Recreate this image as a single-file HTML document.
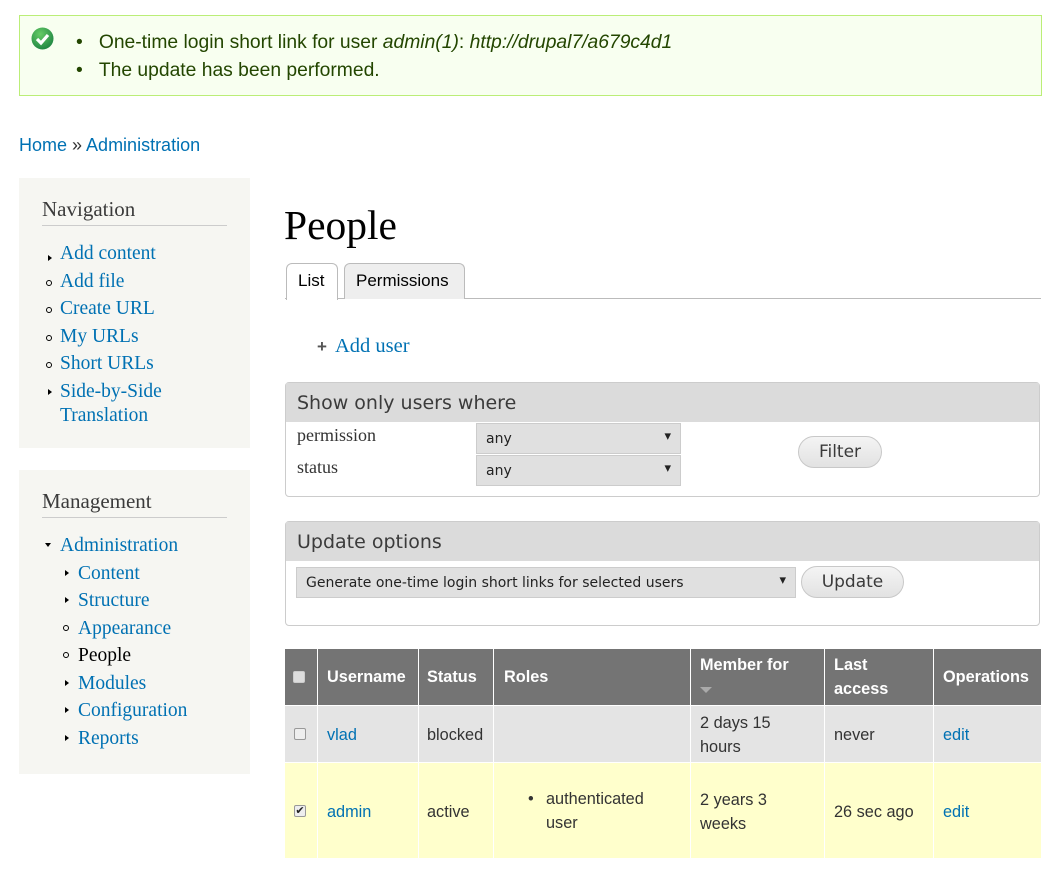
<!DOCTYPE html>
<html><head><meta charset="utf-8"><style>
*{margin:0;padding:0;box-sizing:border-box}
body{width:1063px;height:879px;background:#fff;font-family:"Liberation Sans",sans-serif;position:relative;overflow:hidden;color:#333}
.a{position:absolute}
a{color:#0071b3;text-decoration:none}
.serif{font-family:"Liberation Serif",serif}
.msg{left:19px;top:15px;width:1023px;height:81px;background:#f8fff0;border:1px solid #be7;color:#234600;font-size:19.3px}
.side{background:#f6f6f2;left:19px;width:231px}
.side h2{position:absolute;left:23px;top:19px;font-weight:normal;font-size:21px;color:#3b3b3b;width:185px;border-bottom:1px solid #ccc;padding-bottom:3px;font-family:"Liberation Serif",serif}
.li{position:absolute;font-family:"Liberation Serif",serif;font-size:19.5px;line-height:24px;margin-top:2px}
.tri{position:absolute;width:0;height:0;border-left:4px solid #000;border-top:3.5px solid transparent;border-bottom:3.5px solid transparent}
.circ{position:absolute;width:6px;height:6px;border:1px solid #000;border-radius:50%}
.tri2{position:absolute;width:0;height:0;border-top:4px solid #000;border-left:3.5px solid transparent;border-right:3.5px solid transparent}
.fs{border:1px solid #ccc;border-radius:4px;left:285px;width:755px}
.fs .lg{background:#dbdbdb;height:39px;padding:9px 11px 8px;color:#3b3b3b;font-family:"DejaVu Sans",sans-serif;font-size:19px}
.sel{position:absolute;background:#e0e0e0;border:1px solid #ccc;font-family:"DejaVu Sans",sans-serif;font-size:14px;padding:7px 9px 5px;color:#222}
.sel:after{content:"▾";position:absolute;right:9px;top:5px;font-size:13px}
.btn{position:absolute;background:linear-gradient(#f4f4f4,#e2e2e2);border:1px solid #c8c8c8;border-radius:16px;font-family:"DejaVu Sans",sans-serif;font-size:17px;text-align:center;color:#3a3a3a}
.c{position:absolute;font-size:16.3px;line-height:24px}
.th{position:absolute;background:#747474;color:#fff;font-weight:bold;font-size:16.3px;line-height:24px}
.cb{position:absolute;width:12px;height:12px;border:1px solid #999;border-radius:2px;background:#eee}
</style></head><body>
<div class="a msg">
<svg class="a" style="left:11px;top:11px" width="23" height="23" viewBox="0 0 23 23"><defs><radialGradient id="g" cx=".4" cy=".3" r=".7"><stop offset="0" stop-color="#6c6"/><stop offset="1" stop-color="#284"/></radialGradient></defs><circle cx="11.5" cy="11.5" r="11" fill="url(#g)"/><path d="M6 12l4 4 7-8" stroke="#fff" stroke-width="3.2" fill="none"/></svg>
<div class="a" style="left:56px;top:13px;line-height:28px">
<div>•&nbsp;&nbsp;&nbsp;One-time login short link for user <i>admin(1)</i>: <i>http://drupal7/a679c4d1</i></div>
<div>•&nbsp;&nbsp;&nbsp;The update has been performed.</div></div>
</div>
<div class="a" style="left:19px;top:135px;font-size:18px"><a>Home</a> » <a>Administration</a></div>

<div class="a side" style="top:178px;height:270px"><h2>Navigation</h2>
<div class="tri" style="left:29px;top:77px"></div><a class="li" style="left:41px;top:62px">Add content</a>
<div class="circ" style="left:27px;top:102px"></div><a class="li" style="left:41px;top:90px">Add file</a>
<div class="circ" style="left:27px;top:129px"></div><a class="li" style="left:41px;top:117px">Create URL</a>
<div class="circ" style="left:27px;top:157px"></div><a class="li" style="left:41px;top:145px">My URLs</a>
<div class="circ" style="left:27px;top:184px"></div><a class="li" style="left:41px;top:172px">Short URLs</a>
<div class="tri" style="left:29px;top:211px"></div><a class="li" style="left:41px;top:200px">Side-by-Side<br>Translation</a>
</div>

<div class="a side" style="top:470px;height:304px"><h2>Management</h2>
<div class="tri2" style="left:26px;top:73px"></div><a class="li" style="left:41px;top:62px">Administration</a>
<div class="tri" style="left:46px;top:100px"></div><a class="li" style="left:59px;top:90px">Content</a>
<div class="tri" style="left:46px;top:127px"></div><a class="li" style="left:59px;top:117px">Structure</a>
<div class="circ" style="left:44px;top:155px"></div><a class="li" style="left:59px;top:145px">Appearance</a>
<div class="circ" style="left:44px;top:182px"></div><span class="li" style="left:59px;top:172px;color:#000">People</span>
<div class="tri" style="left:46px;top:210px"></div><a class="li" style="left:59px;top:200px">Modules</a>
<div class="tri" style="left:46px;top:237px"></div><a class="li" style="left:59px;top:227px">Configuration</a>
<div class="tri" style="left:46px;top:265px"></div><a class="li" style="left:59px;top:255px">Reports</a>
</div>

<div class="a serif" style="left:284px;top:201px;font-size:41.5px;color:#000">People</div>
<div class="a" style="left:285px;top:298px;width:756px;height:1px;background:#bbb"></div>
<div class="a" style="left:286px;top:263px;width:52px;height:37px;background:#fff;border:1px solid #bbb;border-bottom:none;border-radius:6px 6px 0 0;font-size:17px;color:#000;padding:7px 11px">List</div>
<div class="a" style="left:344px;top:263px;width:121px;height:36px;background:#eee;border:1px solid #bbb;border-bottom:none;border-radius:6px 6px 0 0;font-size:17px;color:#000;padding:7px 11px">Permissions</div>

<div class="a" style="left:317px;top:337px;font-size:17px;font-weight:bold;color:#555">+</div>
<a class="a serif" style="left:335px;top:335px;font-size:20.5px">Add user</a>

<div class="a fs" style="top:382px;height:115px"><div class="lg">Show only users where</div>
<div class="a serif" style="left:11px;top:42px;font-size:18px">permission</div>
<div class="a serif" style="left:11px;top:74px;font-size:18px">status</div>
<div class="sel" style="left:190px;top:40px;width:205px;height:31px">any</div>
<div class="sel" style="left:190px;top:72px;width:205px;height:31px">any</div>
<div class="btn" style="left:512px;top:53px;width:84px;height:32px;line-height:31px">Filter</div>
</div>

<div class="a fs" style="top:521px;height:105px"><div class="lg">Update options</div>
<div class="sel" style="left:10px;top:45px;width:500px;height:31px">Generate one-time login short links for selected users</div>
<div class="btn" style="left:515px;top:44px;width:103px;height:32px;line-height:31px">Update</div>
</div>

<div class="th" style="left:285px;top:649px;width:32px;height:56px"></div>
<div class="cb" style="left:293px;top:671px;background:#ddd;border-color:#ccc"></div>
<div class="th" style="left:318px;top:649px;width:100px;height:56px;padding:16px 9px">Username</div>
<div class="th" style="left:419px;top:649px;width:74px;height:56px;padding:16px 8px">Status</div>
<div class="th" style="left:494px;top:649px;width:196px;height:56px;padding:16px 10px">Roles</div>
<div class="th" style="left:691px;top:649px;width:133px;height:56px;padding:4px 9px">Member for<br><span style="display:inline-block;border-top:6px solid #aaa;border-left:6px solid transparent;border-right:6px solid transparent;vertical-align:middle"></span></div>
<div class="th" style="left:825px;top:649px;width:108px;height:56px;padding:4px 9px">Last<br>access</div>
<div class="th" style="left:934px;top:649px;width:107px;height:56px;padding:16px 9px">Operations</div>

<div class="a" style="left:285px;top:706px;width:756px;height:56px;background:#e4e4e4"></div>
<div class="a" style="left:285px;top:763px;width:756px;height:95px;background:#ffc"></div>
<div class="a" style="left:317px;top:706px;width:1px;height:152px;background:#fff"></div>
<div class="a" style="left:418px;top:706px;width:1px;height:152px;background:#fff"></div>
<div class="a" style="left:493px;top:706px;width:1px;height:152px;background:#fff"></div>
<div class="a" style="left:690px;top:706px;width:1px;height:152px;background:#fff"></div>
<div class="a" style="left:824px;top:706px;width:1px;height:152px;background:#fff"></div>
<div class="a" style="left:933px;top:706px;width:1px;height:152px;background:#fff"></div>
<div class="a" style="left:285px;top:762px;width:756px;height:1px;background:#fff"></div>

<div class="cb" style="left:294px;top:728px"></div>
<a class="c" style="left:327px;top:723px">vlad</a>
<div class="c" style="left:427px;top:723px">blocked</div>
<div class="c" style="left:700px;top:711px">2 days 15<br>hours</div>
<div class="c" style="left:834px;top:723px">never</div>
<a class="c" style="left:943px;top:723px">edit</a>

<div class="cb" style="left:294px;top:805px;font-size:11px;line-height:10px;color:#222;text-align:center">✔</div>
<a class="c" style="left:327px;top:800px">admin</a>
<div class="c" style="left:427px;top:800px">active</div>
<div class="c" style="left:528px;top:787px">•</div>
<div class="c" style="left:546px;top:787px">authenticated<br>user</div>
<div class="c" style="left:700px;top:788px">2 years 3<br>weeks</div>
<div class="c" style="left:834px;top:800px">26 sec ago</div>
<a class="c" style="left:943px;top:800px">edit</a>
</body></html>
